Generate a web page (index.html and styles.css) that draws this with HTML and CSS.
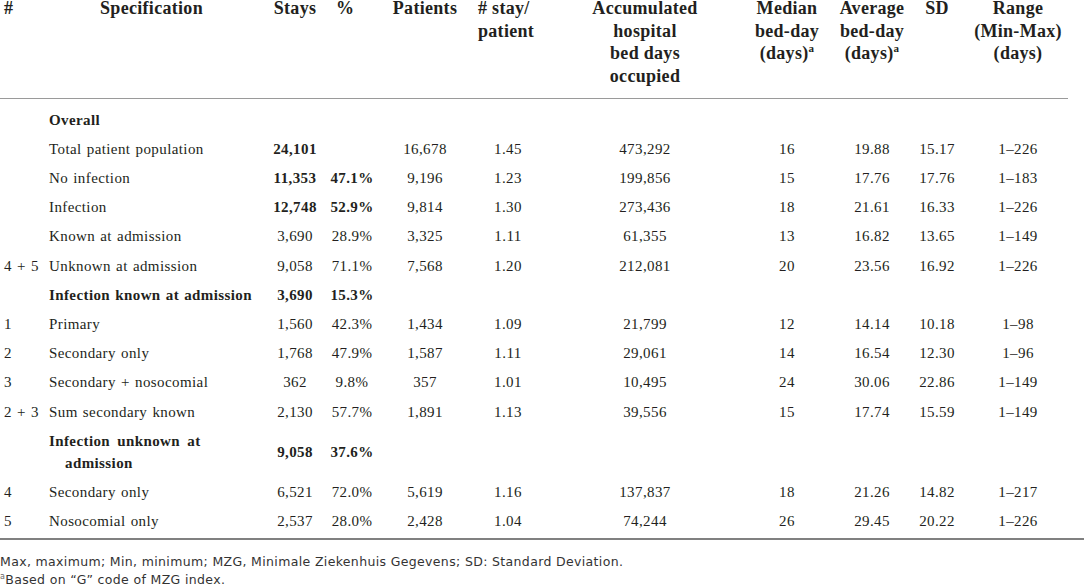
FILE: index.html
```html
<!DOCTYPE html>
<html lang="en">
<head>
    <meta charset="UTF-8">
    <title>Hospital stays by infection status</title>
    <link rel="stylesheet" href="styles.css">
</head>
<body>
    <table class="stats">
        <colgroup>
            <col class="c-num">
            <col class="c-spec">
            <col class="c-stays">
            <col class="c-pct">
            <col class="c-pat">
            <col class="c-sp">
            <col class="c-acc">
            <col class="c-med">
            <col class="c-avg">
            <col class="c-sd">
            <col class="c-range">
        </colgroup>
        <thead>
            <tr>
                <th class="left">#</th>
                <th class="spec-h">Specification</th>
                <th>Stays</th>
                <th class="pct-h">%</th>
                <th>Patients</th>
                <th class="left sp-h"># stay/<br>patient</th>
                <th>Accumulated<br>hospital<br>bed days<br>occupied</th>
                <th>Median<br>bed-day<br>(days)<sup>a</sup></th>
                <th>Average<br>bed-day<br>(days)<sup>a</sup></th>
                <th>SD</th>
                <th class="range">Range<br>(Min-Max)<br>(days)</th>
            </tr>
        </thead>
        <tbody>
            <tr class="first">
                <td></td><td class="b">Overall</td>
                <td></td><td></td><td></td><td></td><td></td><td></td><td></td><td></td><td></td>
            </tr>
            <tr>
                <td></td><td>Total patient population</td>
                <td class="b">24,101</td><td></td><td>16,678</td><td>1.45</td><td>473,292</td><td>16</td><td>19.88</td><td>15.17</td><td class="range">1–226</td>
            </tr>
            <tr>
                <td></td><td>No infection</td>
                <td class="b">11,353</td><td class="b">47.1%</td><td>9,196</td><td>1.23</td><td>199,856</td><td>15</td><td>17.76</td><td>17.76</td><td class="range">1–183</td>
            </tr>
            <tr>
                <td></td><td>Infection</td>
                <td class="b">12,748</td><td class="b">52.9%</td><td>9,814</td><td>1.30</td><td>273,436</td><td>18</td><td>21.61</td><td>16.33</td><td class="range">1–226</td>
            </tr>
            <tr>
                <td></td><td>Known at admission</td>
                <td>3,690</td><td>28.9%</td><td>3,325</td><td>1.11</td><td>61,355</td><td>13</td><td>16.82</td><td>13.65</td><td class="range">1–149</td>
            </tr>
            <tr>
                <td>4 + 5</td><td>Unknown at admission</td>
                <td>9,058</td><td>71.1%</td><td>7,568</td><td>1.20</td><td>212,081</td><td>20</td><td>23.56</td><td>16.92</td><td class="range">1–226</td>
            </tr>
            <tr>
                <td></td><td class="b">Infection known at admission</td>
                <td class="b">3,690</td><td class="b">15.3%</td><td></td><td></td><td></td><td></td><td></td><td></td><td></td>
            </tr>
            <tr>
                <td>1</td><td>Primary</td>
                <td>1,560</td><td>42.3%</td><td>1,434</td><td>1.09</td><td>21,799</td><td>12</td><td>14.14</td><td>10.18</td><td class="range">1–98</td>
            </tr>
            <tr>
                <td>2</td><td>Secondary only</td>
                <td>1,768</td><td>47.9%</td><td>1,587</td><td>1.11</td><td>29,061</td><td>14</td><td>16.54</td><td>12.30</td><td class="range">1–96</td>
            </tr>
            <tr>
                <td>3</td><td>Secondary + nosocomial</td>
                <td>362</td><td>9.8%</td><td>357</td><td>1.01</td><td>10,495</td><td>24</td><td>30.06</td><td>22.86</td><td class="range">1–149</td>
            </tr>
            <tr>
                <td>2 + 3</td><td>Sum secondary known</td>
                <td>2,130</td><td>57.7%</td><td>1,891</td><td>1.13</td><td>39,556</td><td>15</td><td>17.74</td><td>15.59</td><td class="range">1–149</td>
            </tr>
            <tr>
                <td></td><td class="b hang">Infection unknown at<br>admission</td>
                <td class="b">9,058</td><td class="b">37.6%</td><td></td><td></td><td></td><td></td><td></td><td></td><td></td>
            </tr>
            <tr>
                <td>4</td><td>Secondary only</td>
                <td>6,521</td><td>72.0%</td><td>5,619</td><td>1.16</td><td>137,837</td><td>18</td><td>21.26</td><td>14.82</td><td class="range">1–217</td>
            </tr>
            <tr class="last">
                <td>5</td><td>Nosocomial only</td>
                <td>2,537</td><td>28.0%</td><td>2,428</td><td>1.04</td><td>74,244</td><td>26</td><td>29.45</td><td>20.22</td><td class="range">1–226</td>
            </tr>
        </tbody>
    </table>

    <div class="notes">
        <p>Max, maximum; Min, minimum; MZG, Minimale Ziekenhuis Gegevens; SD: Standard Deviation.</p>
        <p><sup>a</sup>Based on “G” code of MZG index.</p>
    </div>
</body>
</html>
```

FILE: styles.css
```css
body {
    margin: 0;
    background: #fff;
    color: #231f20;
    font-family: "Liberation Serif", "Times New Roman", serif;
}

.stats {
    width: 1068px;
    margin-top: -3px;
    border-collapse: collapse;
    table-layout: fixed;
}
.c-num { width: 49px; }
.c-spec { width: 213px; }
.c-stays { width: 66px; }
.c-pct { width: 48px; }
.c-pat { width: 98px; }
.c-sp { width: 68px; }
.c-acc { width: 206px; }
.c-med { width: 78px; }
.c-avg { width: 92px; }
.c-sd { width: 38px; }
.c-range { width: 112px; }

th {
    font-size: 18px;
    line-height: 22.5px;
    font-weight: bold;
    letter-spacing: 0.3px;
    text-align: center;
    vertical-align: top;
    padding: 0 0 11px;
    border-bottom: 1px solid #9a9a9a;
    white-space: nowrap;
}
th.left { text-align: left; padding-left: 4px; }
th.spec-h { padding-right: 8px; }
th.pct-h { text-align: left; padding-left: 8px; }
th.sp-h { padding-left: 4px; }
th sup { font-size: 11px; line-height: 0; vertical-align: 7px; }

td {
    font-size: 15px;
    line-height: 22.2px;
    letter-spacing: 0.4px;
    word-spacing: 1px;
    text-align: center;
    padding: 3.5px 0;
    white-space: nowrap;
}
td:first-child { text-align: left; padding-left: 4px; }
td:nth-child(2) { text-align: left; }
.range { padding-left: 12px; }
.b { font-weight: bold; }
.hang { padding-left: 16px; text-indent: -16px; word-spacing: 3px; }

tr.first td { padding-top: 9.5px; }
tr.last td { padding-bottom: 5px; }

.notes {
    border-top: 2px solid #808080;
    padding-top: 13px;
    color: #333;
    font-family: "DejaVu Sans", "Open Sans", sans-serif;
    font-size: 12.5px;
    letter-spacing: 0.35px;
    line-height: 18px;
}
.notes p { margin: 0; }
.notes sup { font-size: 8px; line-height: 0; vertical-align: 5px; color: #666; }
```
